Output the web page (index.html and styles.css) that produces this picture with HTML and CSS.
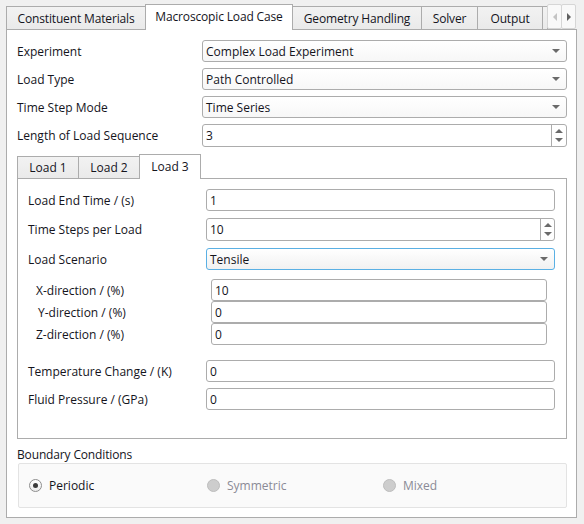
FILE: index.html
```html
<!DOCTYPE html>
<html>
<head>
<meta charset="utf-8">
<link rel="stylesheet" href="styles.css">
</head>
<body>
<div class="window">
  <div class="tabbar">
    <div class="tab w1">Constituent Materials</div>
    <div class="tab active w2">Macroscopic Load Case</div>
    <div class="tab w3">Geometry Handling</div>
    <div class="tab w4">Solver</div>
    <div class="tab w5">Output</div>
    <div class="tab w6"></div>
    <div class="scroll">
      <div class="sbtn"><span class="tri-left"></span></div>
      <div class="sbtn"><span class="tri-right"></span></div>
    </div>
  </div>
  <div class="panel">
    <div class="row"><div class="lbl">Experiment</div><div class="field combo"><span>Complex Load Experiment</span><span class="arrow"></span></div></div>
    <div class="row"><div class="lbl">Load Type</div><div class="field combo"><span>Path Controlled</span><span class="arrow"></span></div></div>
    <div class="row"><div class="lbl">Time Step Mode</div><div class="field combo"><span>Time Series</span><span class="arrow"></span></div></div>
    <div class="row tall"><div class="lbl">Length of Load Sequence</div><div class="field spin"><span>3</span><div class="spinbtns"><span class="half"><span class="up"></span></span><span class="half"><span class="down"></span></span></div></div></div>

    <div class="itabs">
      <div class="itabbar">
        <div class="itab">Load 1</div>
        <div class="itab">Load 2</div>
        <div class="itab active">Load 3</div>
      </div>
      <div class="ipane">
        <div class="irow"><div class="ilbl">Load End Time / (s)</div><div class="field"><span>1</span></div></div>
        <div class="irow tall"><div class="ilbl">Time Steps per Load</div><div class="field spin"><span>10</span><div class="spinbtns narrow"><span class="half"><span class="up"></span></span><span class="half"><span class="down"></span></span></div></div></div>
        <div class="irow last"><div class="ilbl">Load Scenario</div><div class="field combo focus"><span>Tensile</span><span class="arrow"></span></div></div>
        <div class="sub">
          <div class="srow"><div class="slbl">X-direction / (%)</div><div class="field"><span>10</span></div></div>
          <div class="srow"><div class="slbl shift">Y-direction / (%)</div><div class="field"><span>0</span></div></div>
          <div class="srow"><div class="slbl">Z-direction / (%)</div><div class="field"><span>0</span></div></div>
        </div>
        <div class="irow gap-top"><div class="ilbl">Temperature Change / (K)</div><div class="field"><span>0</span></div></div>
        <div class="irow"><div class="ilbl">Fluid Pressure / (GPa)</div><div class="field"><span>0</span></div></div>
      </div>
    </div>

    <div class="bclabel">Boundary Conditions</div>
    <div class="group">
      <div class="radio"><span class="dot checked"></span><span>Periodic</span></div>
      <div class="radio disabled"><span class="dot"></span><span>Symmetric</span></div>
      <div class="radio disabled"><span class="dot"></span><span>Mixed</span></div>
    </div>
  </div>
</div>
</body>
</html>
```
FILE: styles.css
```css
* { box-sizing: border-box; }
html, body { margin: 0; padding: 0; }
body {
  width: 584px;
  height: 524px;
  overflow: hidden;
  background: #f0f0f0;
  font-family: "Open Sans", "Noto Sans", sans-serif;
  font-size: 12px;
  color: #14141c;
}
.window { padding: 4px 7px 0 6px; }

/* outer tabs */
.tabbar {
  display: flex;
  align-items: flex-end;
  height: 25px;
  width: 571px;
  position: relative;
  z-index: 1;
}
.tab {
  flex: none;
  height: 23px;
  border: 1px solid #acacac;
  border-bottom: none;
  background: linear-gradient(#f2f2f2, #eaeaea);
  display: flex;
  align-items: center;
  justify-content: center;
  margin-left: -1px;
  white-space: nowrap;
  letter-spacing: -0.15px;
}
.tab:first-child { margin-left: 0; }
.tab.active {
  height: 26px;
  margin-bottom: -1px;
  background: #fff;
  padding-bottom: 2px;
  position: relative;
  z-index: 2;
}
.w1 { width: 140px; }
.w2 { width: 148px; }
.w3 { width: 130px; }
.w4 { width: 57px; }
.w5 { width: 66px; }
.w6 { width: 6px; }
.scroll {
  flex: none;
  display: flex;
  align-self: flex-end;
  height: 25px;
  margin-left: -1px;
  position: relative;
  z-index: 3;
}
.sbtn {
  width: 15px;
  height: 25px;
  border: 1px solid #d6d6d6;
  border-radius: 2px;
  background: #f9f9f9;
  display: flex;
  align-items: center;
  justify-content: center;
}
.sbtn + .sbtn { margin-left: -1px; }
.tri-left {
  width: 0; height: 0;
  border-top: 4px solid transparent;
  border-bottom: 4px solid transparent;
  border-right: 4px solid #c4c4c4;
}
.tri-right {
  width: 0; height: 0;
  border-top: 4px solid transparent;
  border-bottom: 4px solid transparent;
  border-left: 4px solid #606060;
}

/* main panel */
.panel {
  width: 571px;
  height: 489px;
  border: 1px solid #acacac;
  background: #fff;
  padding: 10px 9px 0 10px;
}
.row {
  display: flex;
  align-items: center;
  height: 22px;
  margin-bottom: 6px;
}
.row.tall { height: 23px; margin-bottom: 0; }
.lbl { width: 185px; flex: none; white-space: nowrap; }
.field {
  flex: 1;
  height: 100%;
  border: 1px solid #acacac;
  border-radius: 3px;
  background: #fff;
  padding-left: 3px;
  display: flex;
  align-items: center;
  white-space: nowrap;
}
.combo { background: linear-gradient(#ffffff, #f7f7f7); }
.combo.focus { border-color: #5ab0e4; background: linear-gradient(#ffffff, #f1f1f1); }
.arrow {
  margin-left: auto;
  margin-right: 6px;
  width: 0; height: 0;
  border-left: 4px solid transparent;
  border-right: 4px solid transparent;
  border-top: 4px solid #6a6a6a;
}
.spinbtns {
  margin-left: auto;
  width: 15px;
  height: 100%;
  border-left: 1px solid #acacac;
  display: flex;
  flex-direction: column;
}
.spinbtns.narrow { width: 14px; }
.half {
  flex: 1;
  display: flex;
  align-items: center;
  justify-content: center;
}
.up {
  width: 0; height: 0;
  border-left: 4px solid transparent;
  border-right: 4px solid transparent;
  border-bottom: 4px solid #6a6a6a;
  margin-top: 1px;
}
.down {
  width: 0; height: 0;
  border-left: 4px solid transparent;
  border-right: 4px solid transparent;
  border-top: 4px solid #6a6a6a;
  margin-bottom: 1px;
}

/* inner tabs */
.itabs { width: 550px; margin-top: 7px; }
.itabbar {
  display: flex;
  align-items: flex-end;
  height: 24px;
  position: relative;
  z-index: 1;
}
.itab {
  flex: none;
  width: 62px;
  height: 22px;
  border: 1px solid #acacac;
  border-bottom: none;
  background: linear-gradient(#f2f2f2, #eaeaea);
  display: flex;
  align-items: center;
  justify-content: center;
  margin-left: -1px;
}
.itab:first-child { margin-left: 0; }
.itab.active {
  height: 25px;
  margin-bottom: -1px;
  background: #fff;
  padding-bottom: 2px;
}
.ipane {
  height: 261px;
  border: 1px solid #acacac;
  background: #fff;
  padding: 10px 11px 0 10px;
}
.irow {
  display: flex;
  align-items: center;
  height: 22px;
  margin-bottom: 7px;
}
.irow.tall { height: 23px; }
.irow.last { margin-bottom: 9px; }
.irow.gap-top { margin-top: 15px; margin-bottom: 6px; }
.ilbl { width: 178px; flex: none; white-space: nowrap; }
.sub { margin: 0 8px 0 8px; }
.srow {
  display: flex;
  align-items: center;
  height: 22px;
}
.slbl { width: 175px; flex: none; white-space: nowrap; }
.slbl.shift { padding-left: 2px; }

/* boundary conditions */
.bclabel {
  margin-top: 8px;
  height: 16px;
  line-height: 16px;
  white-space: nowrap;
  letter-spacing: -0.15px;
}
.group {
  margin-left: 1px;
  width: 549px;
  height: 45px;
  border: 1px solid #e3e3e3;
  border-radius: 2px;
  background: #fafafa;
  display: grid;
  grid-template-columns: 178px 176px auto;
  align-items: center;
  padding-left: 10px;
}
.radio {
  display: flex;
  align-items: center;
  gap: 7px;
  white-space: nowrap;
}
.dot {
  width: 13px;
  height: 13px;
  border-radius: 50%;
  border: 1px solid #8e8e8e;
  background: linear-gradient(#ffffff, #ececec);
  display: flex;
  align-items: center;
  justify-content: center;
}
.dot.checked::after {
  content: "";
  width: 5px;
  height: 5px;
  border-radius: 50%;
  background: #3a3a3a;
}
.radio.disabled { color: #8a8a96; }
.radio.disabled .dot {
  border-color: #bdbdbd;
  background: #cdcdcd;
}
```
